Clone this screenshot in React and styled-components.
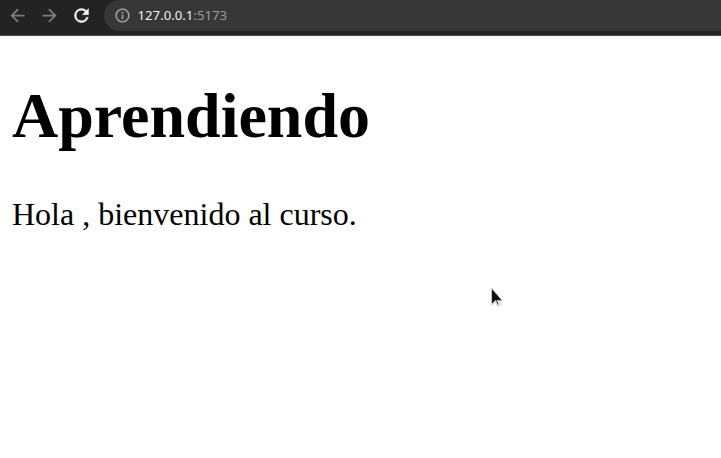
import React from 'react';
import styled, { createGlobalStyle } from 'styled-components';

const GlobalStyle = createGlobalStyle`
  body { margin: 0; background: #fff; overflow: hidden; }
`;

const Browser = styled.div`
  position: relative;
  height: 458px;
  overflow: hidden;
`;

const Toolbar = styled.header`
  display: flex;
  align-items: flex-start;
  box-sizing: border-box;
  height: 36px;
  background: #232323;
  border-bottom: 1px solid #484648;
`;

const Navigation = styled.nav`
  display: flex;
  gap: 11px;
  box-sizing: border-box;
  padding: 4.5px 0 0 7.3px;
  width: 104px;
`;

const NavButton = styled.button`
  display: flex;
  padding: 0;
  border: 0;
  background: none;
  color: ${({ $active }) => ($active ? '#f5f5f5' : '#7d7d7d')};
`;

const Icon = styled.svg`
  display: block;
  width: ${({ $size }) => $size}px;
  height: ${({ $size }) => $size}px;
  fill: currentColor;
`;

const AddressBar = styled.div`
  display: flex;
  align-items: center;
  flex: 1;
  box-sizing: border-box;
  height: 31px;
  padding: 0 0 1px 9.5px;
  gap: 7px;
  border-radius: 15.5px 0 0 15.5px;
  background: #373737;
  color: #a0a0a0;
`;

const Address = styled.span`
  font: 13.2px/18px "Noto Sans", sans-serif;
  color: #9b9b9b;
`;

const Host = styled.span`
  color: #f0f0f0;
`;

const Page = styled.main`
  padding: 43px 12px 0;
  font-family: "Liberation Serif", serif;
  color: #000;
`;

const Title = styled.h1`
  margin: 0;
  font-size: 64px;
  line-height: 74px;
`;

const Message = styled.p`
  margin: 43px 0 0;
  font-size: 32px;
  line-height: 37px;
`;

const Cursor = styled.svg`
  position: absolute;
  left: 490px;
  top: 287px;
  width: 14px;
  height: 21px;
`;

export default function App() {
  return (
    <Browser>
      <GlobalStyle />
      <Toolbar>
        <Navigation>
          <NavButton aria-label="Atrás">
            <Icon $size={21} viewBox="0 0 24 24"><path d="M20 11H7.83l5.59-5.59L12 4l-8 8 8 8 1.41-1.41L7.83 13H20v-2z" /></Icon>
          </NavButton>
          <NavButton aria-label="Adelante">
            <Icon $size={21} viewBox="0 0 24 24"><path d="m12 4-1.41 1.41L16.17 11H4v2h12.17l-5.58 5.59L12 20l8-8z" /></Icon>
          </NavButton>
          <NavButton aria-label="Recargar" $active>
            <Icon $size={21} viewBox="0 0 24 24"><path stroke="currentColor" strokeWidth=".5" d="M17.65 6.35A7.96 7.96 0 0 0 12 4a8 8 0 1 0 7.73 10h-2.08A6 6 0 1 1 12 6c1.66 0 3.14.69 4.22 1.78L13 11h7V4l-2.35 2.35z" /></Icon>
          </NavButton>
        </Navigation>
        <AddressBar>
          <Icon $size={17} viewBox="0 0 24 24"><path stroke="currentColor" strokeWidth=".3" d="M11 7h2v2h-2zm0 4h2v6h-2zm1-9a10 10 0 1 0 0 20 10 10 0 0 0 0-20zm0 18a8 8 0 1 1 0-16 8 8 0 0 1 0 16z" /></Icon>
          <Address><Host>127.0.0.1</Host>:5173</Address>
        </AddressBar>
      </Toolbar>
      <Page>
        <Title>Aprendiendo</Title>
        <Message>Hola , bienvenido al curso.</Message>
      </Page>
      <Cursor viewBox="0 0 14 21">
        <path d="M1.5 1v17l3.8-3.3 2.5 4.6 3.1-1.5-2.2-4h4.2z" fill="#fff" stroke="#b4b4b4" strokeWidth=".7" />
        <path d="M2 2.2v14.4l3.6-3.3h6z" fill="#111" />
        <path d="m6.3 13.3 2 4.2" fill="none" stroke="#444" strokeWidth="1.2" />
      </Cursor>
    </Browser>
  );
}
